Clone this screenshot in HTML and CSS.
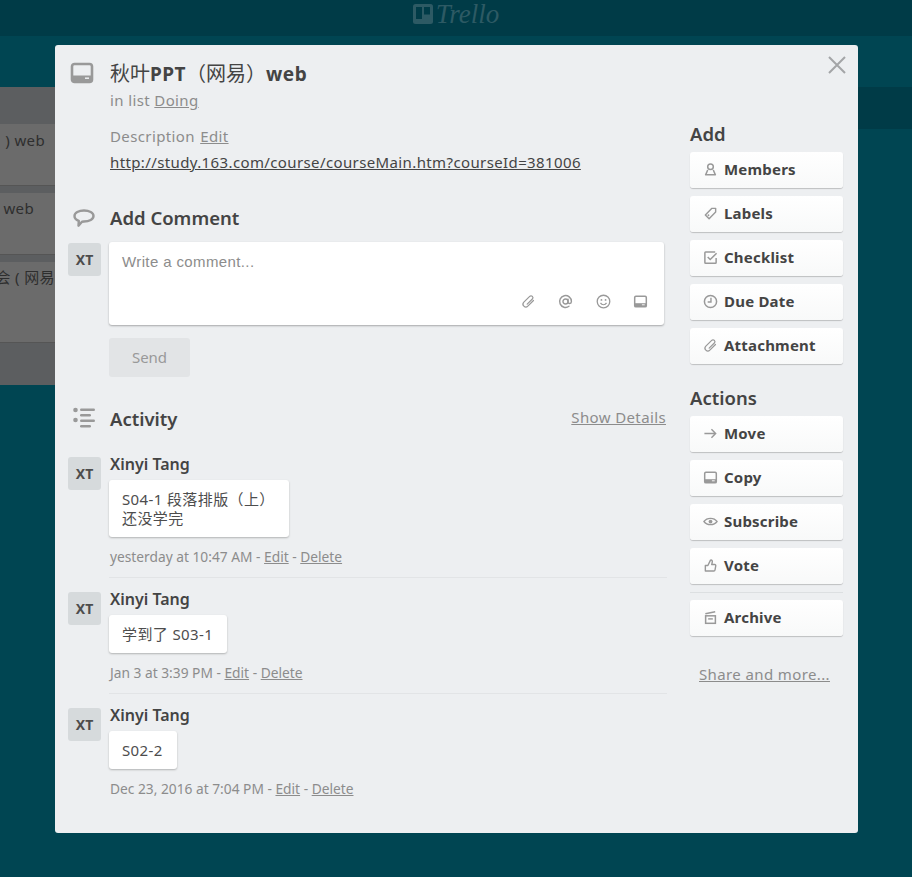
FILE: index.html
```html
<!DOCTYPE html>
<html lang="en">
<head>
    <meta charset="UTF-8">
    <meta name="viewport" content="width=device-width, initial-scale=1.0">
    <title>Card</title>
    <link rel="stylesheet" href="styles.css">
</head>
<body>

<svg class="sprites" width="0" height="0">
    <symbol id="i-card" viewBox="0 0 24 24"><rect x="2" y="3" width="20" height="18" rx="2.5" fill="none" stroke="currentColor" stroke-width="2.6"/><path d="M3 14.5h18V20H3z" fill="currentColor"/><path d="M15 17.2h4" stroke="#edeff1" stroke-width="1.5"/></symbol>
    <symbol id="i-clip" viewBox="0 0 16 16"><g transform="rotate(45 8 8)"><path d="M11 3.5V12a3 3 0 0 1-6 0V3.2a2 2 0 0 1 4 0V11" fill="none" stroke="currentColor" stroke-width="1.3" stroke-linecap="round"/></g></symbol>
    <symbol id="i-at" viewBox="0 0 16 16"><circle cx="8" cy="8" r="2.7" fill="none" stroke="currentColor" stroke-width="1.5"/><path d="M10.7 5.5v3.3c0 2 3.6 2 3.6-.8a6.300 6.300 0 1 0-2.600 5.100" fill="none" stroke="currentColor" stroke-width="1.5" stroke-linecap="round"/></symbol>
    <symbol id="i-smile" viewBox="0 0 16 16"><circle cx="8" cy="8" r="6.7" fill="none" stroke="currentColor" stroke-width="1.4"/><circle cx="5.800" cy="6.300" r="1" fill="currentColor"/><circle cx="10.200" cy="6.300" r="1" fill="currentColor"/><path d="M4.800 9.500c1.400 2.600 5 2.600 6.400 0" fill="none" stroke="currentColor" stroke-width="1.300"/></symbol>
    <symbol id="i-person" viewBox="0 0 16 16"><circle cx="8" cy="5" r="3" fill="none" stroke="currentColor" stroke-width="1.6"/><path d="M5 8.500 2.800 13.700h10.400L11 8.500" fill="none" stroke="currentColor" stroke-width="1.6" stroke-linejoin="round"/></symbol>
    <symbol id="i-label" viewBox="0 0 16 16"><path d="M9.500 2.500h4v4l-7 7-4-4z" fill="none" stroke="currentColor" stroke-width="1.5" stroke-linejoin="round"/><circle cx="5.800" cy="9.800" r="1" fill="currentColor"/></symbol>
    <symbol id="i-check" viewBox="0 0 16 16"><path d="M14 8.500v4.700a.8.8 0 0 1-.8.8H2.800a.8.8 0 0 1-.8-.8V2.800a.8.8 0 0 1 .8-.8h10.200" fill="none" stroke="currentColor" stroke-width="1.600"/><path d="m5 7.500 2.700 2.700L14.500 3.500" fill="none" stroke="currentColor" stroke-width="1.600"/></symbol>
    <symbol id="i-clock" viewBox="0 0 16 16"><circle cx="8" cy="8" r="6.500" fill="none" stroke="currentColor" stroke-width="1.600"/><path d="M8.500 4v4.500H5" fill="none" stroke="currentColor" stroke-width="1.500"/></symbol>
    <symbol id="i-arrow" viewBox="0 0 16 16"><path d="M1.500 8h12M9 3.500 13.500 8 9 12.500" fill="none" stroke="currentColor" stroke-width="1.500"/></symbol>
    <symbol id="i-copy" viewBox="0 0 16 16"><rect x="1.800" y="2.300" width="12.400" height="11.400" rx="1.300" fill="none" stroke="currentColor" stroke-width="1.600"/><path d="M2 9.800h12v3.500H2z" fill="currentColor"/><path d="M9.500 11.500h3" stroke="#fafafa" stroke-width="1"/></symbol>
    <symbol id="i-eye" viewBox="0 0 16 16"><path d="M1 8C4.300 3.500 11.700 3.500 15 8 11.700 12.500 4.300 12.500 1 8z" fill="none" stroke="currentColor" stroke-width="1.400"/><circle cx="8" cy="8" r="2" fill="currentColor"/></symbol>
    <symbol id="i-thumb" viewBox="0 0 16 16"><path d="M2.500 8h2.700l2.800-5.700c1.500-.4 2.200.7 1.900 2l-.6 2.700h3.200c.8 0 1.200.6 1.100 1.300l-.8 4.500c-.1.700-.5 1.100-1.200 1.100H2.500z" fill="none" stroke="currentColor" stroke-width="1.500" stroke-linejoin="round"/></symbol>
    <symbol id="i-archive" viewBox="0 0 16 16"><path d="M2.500 4 13 1.800" fill="none" stroke="currentColor" stroke-width="1.500"/><rect x="2.800" y="6.200" width="10.400" height="8" fill="none" stroke="currentColor" stroke-width="1.600"/><path d="M5.500 9.500h5" stroke="currentColor" stroke-width="1.500"/></symbol>
</svg>

<header class="topbar">
    <div class="logo">
        <svg class="logo-mark" viewBox="0 0 20 20"><rect width="20" height="20" rx="2.500" fill="currentColor"/><rect x="3" y="3" width="6" height="12" fill="#003b47"/><rect x="11" y="3" width="6" height="7.500" fill="#003b47"/></svg>
        <span class="logo-text">Trello</span>
    </div>
</header>

<main class="board">
    <div class="board-strip"></div>
    <section class="list">
        <div class="list-card list-card-a">) web</div>
        <div class="list-card list-card-b">web</div>
        <div class="list-card list-card-c">会 ( 网易</div>
    </section>
</main>

<div class="modal">
    <button class="close" aria-label="Close"><svg viewBox="0 0 18 18" width="18" height="18"><path d="M1 1l16 16M17 1 1 17" fill="none" stroke="currentColor" stroke-width="2"/></svg></button>

    <div class="modal-main">
        <div class="block title-block">
            <svg class="block-icon card-icon"><use href="#i-card"/></svg>
            <h2 class="card-title"><span class="cjk">秋叶</span>PPT<span class="cjk">（网易）</span>web</h2>
            <p class="in-list">in list <a href="#">Doing</a></p>
        </div>

        <div class="description">
            <p class="desc-head">Description <a href="#">Edit</a></p>
            <p class="desc-link"><a href="#">http://study.163.com/course/courseMain.htm?courseId=381006</a></p>
        </div>

        <div class="block comment-head">
            <svg class="block-icon" viewBox="0 0 24 24"><path d="M12 3.500c5.300 0 9.500 2.200 9.500 5.500s-4.200 5.500-9.500 5.500l-2 .2-3.500 4 .3-4.900C4 12.800 2.500 11 2.500 9c0-3.300 4.200-5.500 9.500-5.500z" fill="none" stroke="currentColor" stroke-width="2.400" stroke-linejoin="round"/></svg>
            <h3 class="section-title">Add Comment</h3>
        </div>

        <div class="new-comment">
            <div class="avatar">XT</div>
            <div class="comment-box">
                <div class="placeholder">Write a comment...</div>
                <div class="box-tools">
                    <svg><use href="#i-clip"/></svg>
                    <svg><use href="#i-at"/></svg>
                    <svg><use href="#i-smile"/></svg>
                    <svg><use href="#i-copy"/></svg>
                </div>
            </div>
        </div>
        <button class="send">Send</button>

        <div class="block activity-head">
            <svg class="block-icon" viewBox="0 0 24 24"><g fill="currentColor"><circle cx="3.500" cy="5" r="2.300"/><circle cx="3.500" cy="15" r="2.300"/><rect x="8" y="3.500" width="15" height="2.400" rx="1.200"/><rect x="8" y="9" width="11" height="2.400" rx="1.200"/><rect x="8" y="14.500" width="15" height="2.400" rx="1.200"/><rect x="8" y="20" width="11" height="2.400" rx="1.200"/></g></svg>
            <h3 class="section-title">Activity</h3>
            <a class="show-details" href="#">Show Details</a>
        </div>

        <article class="comment">
            <div class="avatar">XT</div>
            <h4 class="author">Xinyi Tang</h4>
            <div class="bubble">S04-1 段落排版（上）<br>还没学完</div>
            <p class="meta">yesterday at 10:47 AM - <a href="#">Edit</a> - <a href="#">Delete</a></p>
        </article>
        <article class="comment">
            <div class="avatar">XT</div>
            <h4 class="author">Xinyi Tang</h4>
            <div class="bubble">学到了 S03-1</div>
            <p class="meta">Jan 3 at 3:39 PM - <a href="#">Edit</a> - <a href="#">Delete</a></p>
        </article>
        <article class="comment">
            <div class="avatar">XT</div>
            <h4 class="author">Xinyi Tang</h4>
            <div class="bubble">S02-2</div>
            <p class="meta">Dec 23, 2016 at 7:04 PM - <a href="#">Edit</a> - <a href="#">Delete</a></p>
        </article>
    </div>

    <aside class="sidebar">
        <h3 class="side-title">Add</h3>
        <a class="side-btn" href="#"><svg><use href="#i-person"/></svg>Members</a>
        <a class="side-btn" href="#"><svg><use href="#i-label"/></svg>Labels</a>
        <a class="side-btn" href="#"><svg><use href="#i-check"/></svg>Checklist</a>
        <a class="side-btn" href="#"><svg><use href="#i-clock"/></svg>Due Date</a>
        <a class="side-btn" href="#"><svg><use href="#i-clip"/></svg>Attachment</a>

        <h3 class="side-title actions-title">Actions</h3>
        <a class="side-btn" href="#"><svg><use href="#i-arrow"/></svg>Move</a>
        <a class="side-btn" href="#"><svg><use href="#i-copy"/></svg>Copy</a>
        <a class="side-btn" href="#"><svg><use href="#i-eye"/></svg>Subscribe</a>
        <a class="side-btn" href="#"><svg><use href="#i-thumb"/></svg>Vote</a>
        <hr class="side-rule">
        <a class="side-btn" href="#"><svg><use href="#i-archive"/></svg>Archive</a>
        <a class="share" href="#">Share and more...</a>
    </aside>
</div>

</body>
</html>
```

FILE: styles.css
```css
:root {
    --teal: #004552;
    --teal-dark: #003b47;
    --panel: #edeff1;
    --text-dark: #444;
    --text-gray: #8c8c8c;
    --icon-gray: #999;
}

* {
    box-sizing: border-box;
}

html, body {
    height: 100%;
}

body {
    margin: 0;
    background-color: var(--teal);
    color: var(--text-dark);
    font-family: "Noto Sans", "Open Sans", "Noto Sans CJK SC", sans-serif;
    font-size: 15px;
    letter-spacing: .38px;
    overflow: hidden;
}

a {
    color: inherit;
}

p, h2, h3, h4 {
    margin: 0;
}

.sprites {
    position: absolute;
}

.topbar {
    height: 36px;
    background-color: var(--teal-dark);
    display: flex;
    justify-content: center;
    align-items: center;
}

.logo {
    display: flex;
    align-items: center;
    gap: 3px;
    color: #2d5a64;
    margin-top: -8px;
    letter-spacing: 0;
}

.logo-mark {
    width: 20px;
    height: 20px;
}

.logo-text {
    font-family: "Liberation Serif", serif;
    font-style: italic;
    font-size: 27px;
    line-height: 28px;
}

.board {
    padding-top: 51px;
}

.board-strip {
    height: 42px;
    background-color: var(--teal-dark);
}

.list {
    width: 55px;
    height: 298px;
    margin-top: -42px;
    padding-top: 37px;
    background-color: #5c5e60;
    position: relative;
    overflow: hidden;
    color: #2e2e2e;
}

.list-card {
    width: 55px;
    background-color: #6b6b6b;
    border-bottom: 1px solid #555;
    margin-bottom: 7px;
    white-space: nowrap;
    display: flex;
    justify-content: flex-end;
}

.list-card-a {
    height: 62px;
    padding: 6px 10px 0 0;
}

.list-card-b {
    height: 62px;
    padding: 5px 21px 0 0;
}

.list-card-c {
    height: 81px;
    padding-top: 4px;
}

.modal {
    position: absolute;
    left: 55px;
    top: 45px;
    width: 803px;
    height: 788px;
    background-color: var(--panel);
    border-radius: 3px;
    display: flex;
    padding-left: 13px;
}

.close {
    position: absolute;
    right: 12px;
    top: 11px;
    border: 0;
    padding: 0;
    background: none;
    color: #a3a5a7;
    line-height: 0;
}

.modal-main {
    width: 598px;
    padding-left: 41px;
    padding-top: 17px;
}

.block {
    position: relative;
}

.block-icon {
    position: absolute;
    left: -38px;
    top: -2px;
    width: 24px;
    height: 24px;
    color: var(--icon-gray);
}

.card-icon {
    top: 0;
    left: -39px;
}

.card-title {
    font-size: 19px;
    line-height: 24px;
    font-weight: 700;
    letter-spacing: .5px;
    color: var(--text-dark);
    margin-top: -1px;
    margin-left: 1px;
}

.cjk {
    font-family: "Noto Sans CJK SC", sans-serif;
    font-size: 20px;
    font-weight: 400;
    letter-spacing: 0;
}

.in-list {
    line-height: 20px;
    margin-top: 4px;
    color: var(--text-gray);
    margin-left: 1px;
}

.description {
    margin-top: 16px;
    margin-left: 1px;
}

.desc-head {
    color: var(--text-gray);
    line-height: 20px;
}

.desc-head a {
    margin-left: 1px;
}

.desc-link {
    line-height: 20px;
    margin-top: 6px;
    color: var(--text-dark);
}

.comment-head {
    margin-top: 34px;
    margin-left: 1px;
}

.comment-head .block-icon {
    top: 1px;
    left: -38px;
}

.section-title {
    font-size: 18.5px;
    line-height: 24px;
    font-weight: 600;
    letter-spacing: 0;
    color: var(--text-dark);
}

.new-comment {
    position: relative;
    margin-top: 12px;
}

.avatar {
    position: absolute;
    left: -41px;
    top: 1px;
    width: 33px;
    height: 33px;
    border-radius: 3px;
    background-color: #d6dadc;
    font-size: 14px;
    font-weight: 700;
    letter-spacing: 0;
    line-height: 33px;
    text-align: center;
    color: #4d4d4d;
}

.comment-box {
    width: 555px;
    height: 83px;
    background-color: #fff;
    border-radius: 3px;
    box-shadow: 0 1px 2px rgba(0, 0, 0, .3);
    padding: 10px 13px;
    position: relative;
}

.placeholder {
    font-family: "Liberation Sans", sans-serif;
    color: #8c8c8c;
    font-size: 15px;
    line-height: 20px;
}

.box-tools {
    position: absolute;
    right: 16px;
    bottom: 16px;
    display: flex;
    gap: 22.33px;
    color: var(--icon-gray);
}

.box-tools svg {
    width: 15px;
    height: 15px;
}

.send {
    display: block;
    width: 81px;
    height: 39px;
    margin-top: 13px;
    padding: 0 0 2px;
    background-color: #e2e4e6;
    border: 0;
    border-radius: 3px;
    font: inherit;
    color: #999;
}

.activity-head {
    margin-top: 30px;
    margin-left: 1px;
    width: 556px;
    display: flex;
    justify-content: space-between;
    align-items: center;
}

.show-details {
    color: var(--text-gray);
    margin-top: -4px;
}

.comment {
    position: relative;
    width: 558px;
    padding-bottom: 11px;
    margin-bottom: 10px;
    border-bottom: 1px solid #e2e4e6;
}

.comment:first-of-type {
    margin-top: 22px;
}

.comment:last-child {
    border-bottom: 0;
}

.comment .avatar {
    top: 4px;
}

.author {
    margin-left: 1px;
    padding-top: 1px;
    font-size: 16px;
    font-weight: 600;
    letter-spacing: 0;
    line-height: 20px;
    color: var(--text-dark);
}

.bubble {
    display: table;
    margin-top: 6px;
    padding: 10px 14px 9px 13px;
    background-color: #fff;
    border-radius: 3px;
    box-shadow: 0 1px 2px rgba(0, 0, 0, .25);
    line-height: 19px;
    color: #4d4d4d;
}

.meta {
    margin-top: 11px;
    margin-left: 1px;
    font-size: 13.75px;
    letter-spacing: 0;
    line-height: 18px;
    color: var(--text-gray);
}

.sidebar {
    width: 153px;
    margin-left: 24px;
    padding-top: 77px;
}

.side-title {
    font-size: 18.5px;
    line-height: 24px;
    font-weight: 600;
    letter-spacing: 0;
    color: var(--text-dark);
    margin-bottom: 6px;
}

.actions-title {
    margin-top: 22px;
}

.side-btn {
    display: flex;
    align-items: center;
    height: 36px;
    margin-bottom: 8px;
    padding: 0 0 2px 13px;
    background: linear-gradient(#fff, #f8f9f9);
    border-radius: 3px;
    box-shadow: 0 1px 1px rgba(0, 0, 0, .2);
    font-size: 15px;
    font-weight: 700;
    letter-spacing: .2px;
    color: var(--text-dark);
    text-decoration: none;
}

.side-btn svg {
    width: 15px;
    height: 15px;
    margin-right: 6px;
    color: var(--icon-gray);
    flex: none;
}

.side-rule {
    margin: 0 0 7px;
    border: 0;
    border-top: 1px solid #dcdfe1;
}

.share {
    display: block;
    margin-top: 28px;
    margin-left: 9px;
    line-height: 20px;
    color: var(--text-gray);
}
```
